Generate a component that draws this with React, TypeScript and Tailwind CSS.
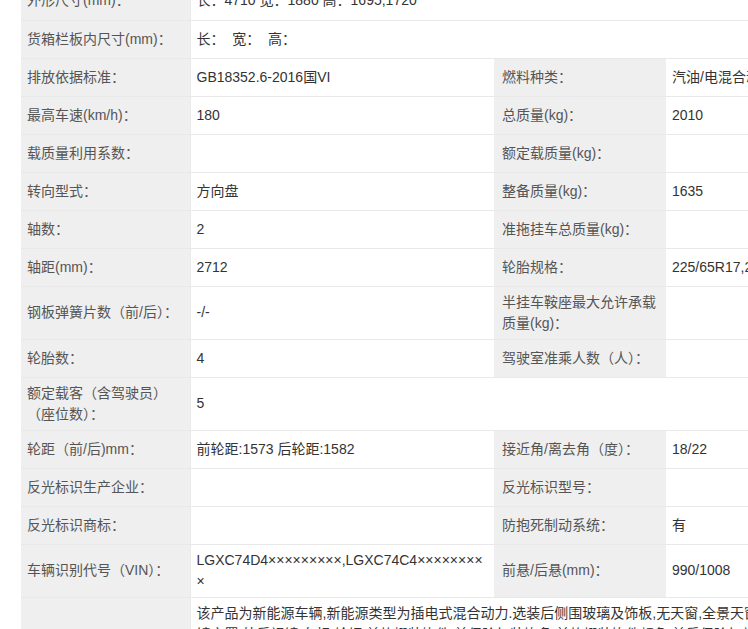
import React from "react";

function Label({ children }: { children?: React.ReactNode }) {
  return (
    <td className="h-[38px] bg-[#efefef] border-b border-r border-[#e9e9e9] px-[6px] py-[5px] leading-[21px] text-[#555] align-middle">
      {children}
    </td>
  );
}

function Label2({ children }: { children?: React.ReactNode }) {
  return (
    <td className="h-[38px] bg-[#efefef] border-b border-[#e9e9e9] pl-[8px] pr-[6px] py-[5px] leading-[21px] text-[#555] align-middle">
      {children}
    </td>
  );
}

function Value({ children, span }: { children?: React.ReactNode; span?: number }) {
  return (
    <td
      colSpan={span}
      className="h-[38px] bg-white border-b border-[#e9e9e9] px-[6px] py-[5px] leading-[21px] text-[#333] align-middle break-all"
    >
      {children}
    </td>
  );
}

// [label, value, label, value]; a row with one pair spans the full width
const rows: [string, string, string?, string?][] = [
  ["外形尺寸(mm)：", "长：4710 宽：1880 高：1695,1720"],
  ["货箱栏板内尺寸(mm)：", "长：\u00a0 宽：\u00a0 高："],
  ["排放依据标准：", "GB18352.6-2016国VI", "燃料种类：", "汽油/电混合动力"],
  ["最高车速(km/h)：", "180", "总质量(kg)：", "2010"],
  ["载质量利用系数：", "", "额定载质量(kg)：", ""],
  ["转向型式：", "方向盘", "整备质量(kg)：", "1635"],
  ["轴数：", "2", "准拖挂车总质量(kg)：", ""],
  ["轴距(mm)：", "2712", "轮胎规格：", "225/65R17,225/60R18"],
  ["钢板弹簧片数（前/后）：", "-/-", "半挂车鞍座最大允许承载质量(kg)：", ""],
  ["轮胎数：", "4", "驾驶室准乘人数（人）：", ""],
  ["额定载客（含驾驶员）（座位数）：", "5"],
  ["轮距（前/后)mm：", "前轮距:1573 后轮距:1582", "接近角/离去角（度）：", "18/22"],
  ["反光标识生产企业：", "", "反光标识型号：", ""],
  ["反光标识商标：", "", "防抱死制动系统：", "有"],
  [
    "车辆识别代号（VIN）：",
    "LGXC74D4×××××××××,LGXC74C4×××××××××",
    "前悬/后悬(mm)：",
    "990/1008",
  ],
  [
    "",
    "该产品为新能源车辆,新能源类型为插电式混合动力.选装后侧围玻璃及饰板,无天窗,全景天窗可选,内后视镜空置,外后视镜,车标,轮辋,前格栅装饰件,前保险杠装饰条,前格栅装饰件颜色,前后保险杠颜色可选.",
  ],
];

export default function App() {
  return (
    <div
      className="w-[748px] h-[629px] overflow-hidden bg-white text-[14px]"
      style={{ fontFamily: '"Liberation Sans", Arial, "Noto Sans CJK SC", sans-serif' }}
    >
      <div className="pl-[21px] -mt-[18px]">
        <table className="table-fixed border-collapse w-[830px]">
          <colgroup>
            <col className="w-[169px]" />
            <col className="w-[304px]" />
            <col className="w-[172px]" />
            <col className="w-[185px]" />
          </colgroup>
          <tbody>
            {rows.map((r, i) => (
              <tr key={i}>
                <Label>{r[0]}</Label>
                {r.length === 2 ? (
                  <Value span={3}>{r[1]}</Value>
                ) : (
                  <>
                    <Value>{r[1]}</Value>
                    <Label2>{r[2]}</Label2>
                    <Value>{r[3]}</Value>
                  </>
                )}
              </tr>
            ))}
          </tbody>
        </table>
      </div>
    </div>
  );
}
